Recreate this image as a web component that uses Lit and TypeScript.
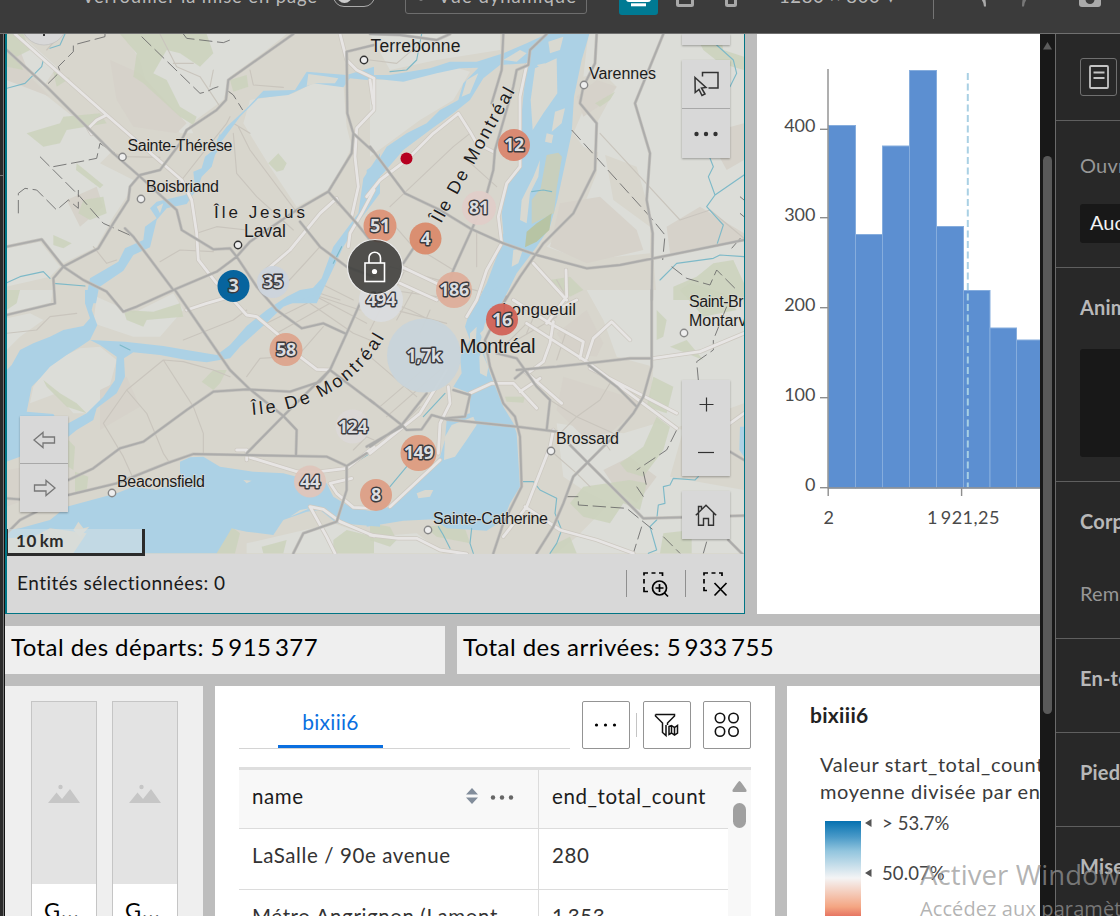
import { LitElement, html, svg, css } from "lit";
import { customElement } from "lit/decorators.js";

/* Map geometry is kept in four tiles, each drawn at three units per pixel. */
type Tile = "A" | "B" | "C" | "D";
const ORIGIN: Record<Tile, string> = {
  A: "translate(0 0) scale(.33333)",
  B: "translate(370 0) scale(.33333)",
  C: "translate(0 290) scale(.33333)",
  D: "translate(370 290) scale(.33333)",
};

const rural: [Tile, string][] = [
  ["A", "M20 160L130 280 270 390 340 450 300 490 400 540 380 590 340 650 290 740 190 790 120 720 20 740ZM20 102H60L170 200 130 260 60 190 20 170ZM370 102H860L800 150 690 230 670 300 560 380 520 340 440 250 420 180ZM730 370L750 300 880 280 940 250 1030 250 1040 380 1055 440 1000 560 890 620 810 500ZM500 330L560 360 580 400 540 400ZM20 745L120 725 180 800 150 830 20 860Z"],
  ["B", "M30 240L250 200 300 215 250 300 150 360 0 470 0 240ZM0 102H390V150L200 180 60 210ZM655 102H1122V900H860L840 640 800 500 640 440 610 400 640 330 680 370 740 260 700 220 640 230ZM690 380L730 600 840 680 840 760 640 780 530 740 640 620 680 520Z"],
  ["C", "M100 290L150 220 240 175 300 170 350 210 320 320 260 370 220 370 170 310 90 340ZM290 20L400 70 520 10 550 60 480 140 400 140 280 100ZM20 0H160L150 45 20 75ZM20 85L90 70 130 90 60 140 20 180ZM740 760L1000 700 1122 740V790H740Z"],
  ["D", "M650 0H1122V340L900 420 840 360 850 230 740 200 700 90ZM560 400L760 430 860 400 940 420 900 560 1122 600V790H560L620 740 720 640 640 600 580 560ZM0 740L140 730 220 790H0Z"],
];

const urban: [Tile, string][] = [
  ["A", "M20 240L150 290 90 230 60 150 20 150ZM330 180L420 220 560 370 530 400 400 380 350 300ZM200 600L290 560 310 620 240 680Z"],
  ["B", "M620 290L680 240 740 260 700 310 640 350ZM570 610L690 590 800 690 820 750 650 790 540 740ZM890 680L990 620 1122 700V720L900 760ZM1010 400L1122 370V480L1070 510Z"],
  ["C", "M300 300L380 260 420 350 300 420ZM20 540L80 530 100 620 20 650Z"],
  ["D", "M560 130L650 60 700 160 680 200 600 190ZM580 260L740 310 820 340 720 430 640 440 560 360ZM700 540L780 500 860 560 800 640 740 600Z"],
];

const parks: [Tile, string][] = [
  ["A", "M360 102H620L640 160 600 200 540 160 500 150 460 220 500 240 540 320 590 350 580 375 540 350 430 250 400 230 410 160ZM690 240L740 225 745 260 700 275ZM20 102H70L90 150 50 170 70 210 20 200ZM80 400L180 370 190 350 300 340 320 370 200 390 180 430 130 440ZM805 490L835 460 860 490 850 510 830 515ZM250 600L310 590 320 640 270 660 235 640ZM160 705L215 730 190 745 160 735ZM230 490L310 555 300 565 228 510ZM160 215L210 235 170 260Z"],
  ["B", "M975 102H1050L1060 150 1122 170V210L1050 190 1000 150ZM675 310L735 275 720 300 690 320ZM910 860L980 830 1030 790 1090 780 1122 850V900H910ZM970 410L1010 450 990 470Z"],
  ["C", "M370 60L460 65 540 40 550 80 440 90 430 110 380 90ZM605 275L640 240 680 240 660 280 640 300ZM130 270L180 310 230 340 260 370 200 350 140 290ZM225 545L265 560 260 600 225 610ZM660 750L695 710 720 730 705 790H650ZM785 770L860 750 850 790H790ZM1000 750L1040 720 1122 740V790H1000ZM20 0H60L50 40 20 60ZM205 450L225 470 220 540 205 530Z"],
  ["D", "M850 260L910 290 890 370 830 350ZM750 520L820 470 860 380 900 410 880 480 820 560 770 545ZM600 640L640 590 780 570 830 580 810 660 760 640 720 700 640 680ZM560 760L600 740 620 790H540ZM880 730L965 720V790H870ZM0 700L60 710 80 750 60 770 0 750ZM860 60L890 90 880 140 860 150ZM900 170L950 150 1000 210ZM405 320L465 320 460 338 410 335ZM930 0L960 -20 1060 10 1100 60 1000 80ZM165 710L280 700 300 760 200 740ZM540 -30L600 -40 640 0 600 20Z"],
];

const water: [Tile, string][] = [
  ["A", "M1122 200L1040 225 920 215 885 270 790 272 740 325 680 380 650 420 668 420 720 350 775 295 865 285 940 250 1030 262 1050 235 1122 242ZM660 400L640 450 615 470 605 505 580 515 585 560 555 585 470 605 450 625 470 655 435 680 430 720 375 745 355 785 270 835 255 910H288L297 862 370 812 400 765 450 742 470 660 500 625 560 612 595 560 605 530 635 500 645 465 668 430ZM1140 460L1090 535 1075 640 1000 740 965 835 925 880 850 910H950L1000 805 1030 740 1080 660 1140 580Z"],
  ["B", "M530 102L470 130 400 160 320 185 240 185 180 205 60 225 0 225V235L100 245 200 220 270 205 325 203 280 250 265 300 210 330 170 370 110 400 50 440 20 490 -10 510V570L40 520 100 450 180 390 250 340 300 300 340 235 390 195 470 190 450 390 470 440 440 510 410 560 395 640 400 700 380 770 350 850 315 920H390L440 820 500 740 540 680 562 600 590 470 605 400 612 290 635 180 658 102Z"],
  ["C", "M20 240L35 225 60 180 100 160 150 140 190 120 250 108 270 85 255 40V0H290L275 60 292 105 270 150 240 170 200 195 150 230 120 265 95 290 80 365 160 372 205 440 60 500 20 515ZM270 150L375 155 490 168 560 180 650 195 690 165 740 108 800 60 860 20 900 0 960 -10 955 12 895 32 850 50 800 98 720 170 690 205 620 217 560 210 480 195 400 187 372 205 375 260 350 310 290 355 280 390 230 420 205 440V400L260 370 310 320 345 270 350 200 300 165ZM20 722L60 715 150 690 200 650 350 610 400 590 470 600 520 580 545 565 540 545V515L570 502 610 500 660 530 760 545 850 550 890 560 980 580 1000 620 1050 650 1140 670V710L1080 705 1010 700 960 660 920 665 850 690 820 735 740 725 715 720 695 715 680 740 650 790H220L260 730 150 715 100 740 20 745Z"],
  ["D", "M385 -10L330 20 300 60 285 110 300 150 270 200 275 250 250 290 300 310V370L230 390 225 450 210 500 150 570 60 650 -10 665V710L100 692 190 688 230 715 350 722 400 690 420 640 450 590 440 430 430 400 400 350 380 300 360 250 345 200 330 160 345 100 380 60 420 -10ZM1110 410H1122V500L1108 480Z"],
];

const islands: [Tile, string][] = [
  ["A", "M925 222L970 228 1015 235 1005 250 950 250 920 258ZM470 620L490 610 480 640Z"],
  ["B", "M495 205L560 175 562 280 520 340 488 390 482 300ZM555 335L585 325 575 370 545 395ZM530 400L550 405 545 430 525 425ZM490 530L510 480 505 530 480 580 470 670 450 660 455 600ZM400 180L450 150 470 160 440 185ZM290 240L325 220 300 280 275 290ZM535 125L580 110 570 150 540 160ZM500 195L525 190 520 210ZM430 750L460 745 445 790 425 800Z"],
  ["C", "M220 720L235 695 250 715 268 710 240 740ZM730 570L755 572 740 580ZM900 660L930 655 870 680Z"],
  ["D", "M245 405L310 380 320 405 290 450 255 500 222 510 225 440ZM140 610L165 600 190 600 180 620 145 625ZM335 185L355 230 350 260 330 250 328 200ZM300 130L320 110 315 190 300 170ZM330 130L350 110 345 160Z"],
];

const greenIslands: [Tile, string][] = [
  ["B", "M530 465L565 458 576 470 560 565 552 640 485 672 485 600 512 565Z"],
];
const darkIslands: [Tile, string][] = [["B", "M500 670L545 640 538 690 500 725 465 742 470 695Z"]];

const minor: [Tile, string][] = [
  ["A", "M480 102L530 200 600 230 640 290 660 320M340 460L380 470 480 472M545 540L600 470 680 370 690 350M715 380L750 450 870 610 900 650M700 400L710 520 770 590 880 690M590 700L650 680 740 690M280 740L320 790 350 780M480 785L540 750 640 755M850 860L910 795 960 740M960 850L1060 900M930 870L1020 900M140 150L220 60M750 400L700 370M640 210L630 260M520 190L580 190M850 262L760 255 750 210"],
  ["B", "M60 620L250 440 300 400M50 650L120 730 250 810M280 470L380 560M60 870L200 890M690 400L930 660 1020 630 1122 715M110 800L60 900M320 700L320 800M30 850L60 800 350 880M0 180L80 190 150 130"],
  ["C", "M20 130L110 120 150 80 230 70M490 210L380 300 310 400 370 500 395 555M380 300L440 370 490 490 510 520M490 210L550 215 640 240 690 260M490 210L580 350 610 430V490M550 150L700 90 740 60M740 260L780 205 860 200M720 140L800 100 960 20 1080 60M830 130L990 40M900 190L970 110M930 40L1060 130 1122 155M950 20L1100 100M1060 480L1100 440 1122 450"],
  ["D", "M0 40L230 100M20 20L120 60 220 110M60 0L0 120M130 0L80 90M180 60L150 130M0 200L140 320M30 350L170 230M50 380L210 240M540 330L620 380 730 430M720 280L690 330 620 380 570 430M470 100L400 170M440 150L560 80M540 480L620 550 660 590M720 480L690 440M500 60L470 130M590 120L560 210M560 -30L600 40M0 490L60 440 150 350"],
];

const white: [Tile, string][] = [
  ["A", "M45 102L320 345 545 540 575 600 590 700 595 780 650 850M320 345L290 360 265 385 275 402M1020 102L1040 180 1070 210 1122 235V330L1070 385 1065 470 1075 560 1055 650M800 810L870 750 960 640 1010 595 1015 610M1122 570L1085 640 1050 700 1045 740"],
  ["B", "M-10 590L30 540 110 480 190 400 265 340 300 395 320 430 370 455M470 195L450 290 450 390 450 500 410 550 385 650 395 730 350 810 320 900 290 950M490 790L590 900M588 810L590 890 530 970M95 800L210 855M90 850L200 900M0 240L10 310"],
  ["C", "M560 60L620 40 690 20 740 75 770 80 830 130 900 200 950 238 990 240M750 502L890 545 960 545 1040 535 1122 470M1005 790L980 740 930 650 970 658 1020 695 1122 738M1055 565L990 580 1010 610 1060 652 1122 655M710 480H740V510"],
  ["D", "M470 100L650 215 920 415M850 205L990 185 1122 130M430 30L540 100 640 155 630 205M550 95L540 160 520 215 480 245M650 205L670 145 725 95 780 150M660 235L920 370M550 420L540 470 470 650 400 740M465 650L570 720 680 750 790 790M0 735L85 745 140 745 210 780 290 792M60 650L210 510M300 310L365 280 430 280 500 355M460 240L575 340M510 265L450 305M235 290L240 340 210 400 205 490M0 490L150 370 230 240M580 50L620 30M1080 400L1122 370"],
];

const major: [Tile, string][] = [
  ["A", "M20 150L140 260 340 460 420 530 530 630 545 690 640 748 690 745 710 770 770 860 830 930 905 985 970 970 1035 1000M880 102L685 240 678 300 650 330 560 390 540 430 480 510 420 525 390 560 385 600 340 670 295 745 190 800 160 835 165 910 20 945M1122 135L1040 155 1042 340 1060 400 1055 460 985 575 890 630 750 725 710 770 650 815 520 870 410 920 370 935 320 875 250 840 190 800M20 740L125 718 190 800M375 685L400 710 520 870M1060 400L1120 455M985 575L1070 670 1110 720M900 665L960 740 1040 800 1120 830"],
  ["B", "M0 440L105 580 210 630 300 685 400 730 500 765 650 805 750 795 850 775 1122 720M400 102L395 210 365 310M530 102L480 150 475 195 440 210 430 260 375 450 370 510 345 600 300 700 250 810 220 900M680 102L675 190 640 260 630 310 680 370 675 510 640 580 610 640 520 730 450 830 400 910M880 102L795 310 840 460 830 600 848 700 845 900M0 102L90 105 200 120 240 102M140 730L100 790"],
  ["C", "M525 0L690 240 750 298 850 378 890 420 888 495M205 570L280 535 360 475 430 455 560 360 640 305 740 298 870 305 960 275 990 240 1040 130 1080 40M990 240L1122 340M205 615L350 580 500 520 580 492 980 500 1040 528 1100 490M740 490L850 378 990 240M20 730L60 690 110 665M1040 528V600L1010 695 910 730 880 790M20 625L60 628"],
  ["D", "M0 330L95 405 110 420 155 418 185 375 230 388 440 410 560 425M410 20L370 100 345 150 360 230 400 340 435 380 450 440 455 590 430 640 400 700 370 790M440 240L560 230 650 220 780 205 845 205M845 0V230L820 320 790 370 740 430 660 510 610 560 580 640 550 710 500 790M600 465L820 685 1122 677M380 190L440 205 465 240 500 290 540 330 530 420M465 240L435 265M655 225L740 290 800 350M0 470L95 405 170 310M250 300L300 315 285 380 225 385M1075 750L1120 795M1080 485L1122 510M-10 470L95 410"],
];

const streams: [Tile, string][] = [
  ["A", "M20 265L75 250 125 200 130 180M195 102L180 135 150 145M20 848L60 830 130 815 150 835M160 850L255 858M1000 790L1025 740"],
  ["B", "M1040 135L1090 180 1100 220 1080 260M1020 475L1030 500 1015 530 1035 585 1010 620 1060 675 1042 730M1035 585L1122 525M870 840L920 790 1030 775 1050 765 1122 770M60 215L110 210 140 180 155 102M485 575L520 570 545 575M1025 325V330"],
  ["C", "M360 165L390 180M1110 490L1045 530"],
  ["D", "M985 560L975 570 910 565 900 585 880 590 885 640 865 645 860 690 840 710 860 780 835 790M455 575L490 575 510 600 560 625 555 670 575 720 560 760 540 790M205 710L220 735 240 775M305 715L300 760 310 790M225 310L160 380M110 530L60 590"],
];

const borders: [Tile, string][] = [
  ["A", "M425 110L600 280 620 275 640 265 655 260M315 102V110L220 135V155L175 200 180 215 135 260M550 102L560 115 670 128 690 120M680 270L700 285 728 330M120 470L240 590 310 670 400 710M160 500L240 485 290 475 300 430 345 460M55 640V580L75 565 110 570 170 630 205 600 235 625 235 570"],
  ["B", "M605 390L840 650 885 705 878 780M905 800L950 835 1020 855 1040 810 1100 870M1110 590L1122 600M1110 640L1122 650M1085 745L1115 710"],
  ["D", "M1070 50L1030 150 1030 180 980 215 985 270M920 420L890 480 800 540M820 545L830 590M585 620L625 620 625 645 770 655 850 720M815 710L790 790M880 740L930 790M1010 755L1000 790M800 590L820 620"],
];

const shapes = (list: [Tile, string][], cls: string) =>
  list.map(([t, d]) => svg`<path class=${cls} transform=${ORIGIN[t]} d=${d}></path>`);

/* x, baseline, drawn width, size, label */
const places: [number, number, number, number, string][] = [
  [370.5, 52, 90, 17.5, "Terrebonne"],
  [589, 79, 67, 16, "Varennes"],
  [127.5, 151, 105, 16, "Sainte-Thérèse"],
  [146, 192, 73, 16, "Boisbriand"],
  [214, 218, 91, 17, "Île Jesus"],
  [244, 237, 42, 17.5, "Laval"],
  [117, 487, 88, 16, "Beaconsfield"],
  [502, 315, 74, 17, "Longueuil"],
  [459.5, 353, 76, 20.5, "Montréal"],
  [556, 444, 63, 16, "Brossard"],
  [433, 524, 115, 16, "Sainte-Catherine"],
  [689, 307, 80, 16, "Saint-Bruno"],
  [689, 326, 77, 16, "Montarville"],
];
const towns: [number, number, boolean][] = [
  [364, 60, true], [584, 85, false], [122.5, 157, false], [141, 199, false], [238, 245, true],
  [112, 493, false], [551, 451, false], [428, 530, false], [684, 333, false],
];
/* x, y, radius, fill, count */
const clusters: [number, number, number, string, string][] = [
  [273, 282, 16, "#ccd4dc", "35"],
  [233.5, 286, 16, "#00609c", "3"],
  [514, 145, 16, "#d98770", "12"],
  [479, 208, 17, "#e0cdc8", "81"],
  [380, 226, 16.5, "#dd9579", "51"],
  [425.5, 238.5, 16, "#da8c6d", "4"],
  [454, 290, 18, "#deae9b", "186"],
  [381, 300, 22, "#dadcde", "494"],
  [424, 355.5, 37, "#c8d4da", "1,7k"],
  [502, 319.5, 16, "#d2655a", "16"],
  [286, 349.5, 16.5, "#dda58d", "58"],
  [352.5, 426.5, 17, "#dbd8d6", "124"],
  [418.5, 453, 18, "#dd9d81", "149"],
  [310, 481.5, 16, "#dec5bb", "44"],
  [376, 495, 16, "#dda087", "8"],
];

const bars: [number, number, number][] = [
  [828.5, 27, 125.5], [855.5, 27, 234.5], [882.5, 27, 146], [909.5, 27, 70.5],
  [936.5, 27, 226.5], [963.5, 26.5, 290.5], [990, 26.5, 328], [1016.5, 27, 340],
];

@customElement("station-map")
class StationMap extends LitElement {
  static styles = css`
    :host { display: block; position: relative; height: 520px; }
    svg { display: block; }
    .canvas { position: absolute; inset: 0; overflow: hidden; }
    .rural { fill: #dcddd8; }
    .urban { fill: #d6d2ca; }
    .park { fill: #cbd2bc; opacity: .85; }
    .water { fill: #acd1e5; }
    .island { fill: #d9d9d1; }
    .green { fill: #c8cfbd; }
    .dark { fill: #b7c4a4; }
    path.minor, path.casing, path.white, path.major, path.shade, path.stream, path.border {
      fill: none; stroke-linejoin: round; stroke-linecap: round;
    }
    .minor { stroke: #c9c5bd; stroke-width: 3.4; }
    .casing { stroke: #cdc9c1; stroke-width: 13; }
    .white { stroke: #e7e5e4; stroke-width: 8.5; }
    .shade { stroke: #c4c2bd; stroke-width: 9.5; }
    .major { stroke: #acacab; stroke-width: 5.5; }
    .stream { stroke: #7db9c8; stroke-width: 3.4; }
    path.border { stroke: #6a6a6a; stroke-width: 2.6; stroke-dasharray: 40 14; stroke-linecap: butt; }
    .place { font-family: "Liberation Sans", Arial, sans-serif; fill: #1c1c1c; stroke: #dedcd6; stroke-width: 1.6px; stroke-opacity: .75; paint-order: stroke; }
    .isle { font-size: 18px; }
    .count { font: 700 18px "Noto Sans", "Open Sans", sans-serif; fill: #dcdde0; stroke: #3b3b3e; stroke-width: 2.8px; paint-order: stroke; stroke-linejoin: round; text-anchor: middle; letter-spacing: -.4px; }
    .btns { position: absolute; display: flex; flex-direction: column; width: 48px; background: #d8d8d8; box-shadow: 0 1px 2px rgba(0,0,0,.3); }
    .btn { height: 48px; display: grid; place-items: center; }
    .rule { height: 1px; background: #a8a8a8; }
    .peek { right: 14px; top: 0; height: 11px; }
    .select { right: 14px; top: 26px; }
    .select .btn:last-child { height: 49px; }
    .zoom { right: 14px; top: 346px; }
    .home { right: 14px; top: 457px; }
    .history { left: 13px; top: 382px; }
    .history .btn:first-child { height: 47px; }
    .scale { box-sizing: border-box; position: absolute; left: 0; bottom: -2px; width: 138px; height: 27px; padding-left: 8px; border: solid #2b2b2b; border-width: 0 3px 3px 1px; background: rgba(216,225,228,.5); font: 700 17px/23px Lato, sans-serif; color: #2b2b2b; letter-spacing: .6px; }
  `;

  render() {
    return html`
      <svg class="canvas" width="737" height="520" viewBox="7 34 737 520">
        <defs>
          <path id="east" d="M441 224Q474 164 517 88"></path>
          <path id="west" d="M252 415Q345 408 386 335"></path>
        </defs>
        <rect x="7" y="34" width="738" height="520" fill="#d8d6cd"></rect>
        ${shapes(rural, "rural")}${shapes(urban, "urban")}${shapes(parks, "park")}
        ${shapes(minor, "minor")}${shapes(water, "water")}
        ${shapes(islands, "island")}${shapes(greenIslands, "green")}${shapes(darkIslands, "dark")}
        ${shapes(streams, "stream")}${shapes(borders, "border")}
        ${shapes(white, "casing")}${shapes(white, "white")}
        ${shapes(major, "shade")}${shapes(major, "major")}
        <circle cx="44" cy="22" r="23" fill="#d8d8d8" stroke="#bbb" stroke-width=".6"></circle>
        <path d="M44 30V36" stroke="#333" stroke-width="2"></path>
        ${towns.map(([x, y, city]) => svg`<circle cx=${x} cy=${y} r="3.7" fill="#eee" stroke=${city ? "#333" : "#888"} stroke-width="1.4"></circle>`)}
        ${places.map(([x, y, w, s, t]) => svg`<text class="place" x=${x} y=${y} font-size=${s} textLength=${w}>${t}</text>`)}
        <text class="place isle" textLength="152"><textPath href="#east" textLength="152">Île De Montréal</textPath></text>
        <text class="place isle" textLength="160"><textPath href="#west" textLength="160">Île De Montréal</textPath></text>
        ${clusters.map(([x, y, r, fill, n]) => svg`<circle cx=${x} cy=${y} r=${r} fill=${fill} fill-opacity=".97"></circle><text class="count" x=${x} y=${y + 6}>${n}</text>`)}
        <circle cx="406.5" cy="158.5" r="6" fill="#b6001f"></circle>
        <circle cx="375" cy="267" r="27.5" fill="#3c3c3a" fill-opacity=".88" stroke="#ededed" stroke-width="1.2"></circle>
        <g fill="none" stroke="#fff" stroke-width="1.6"><rect x="365" y="263" width="19.500" height="18.500"></rect><path d="M369 263V258A5.700 5.700 0 0 1 380.500 258V263"></path></g>
        <circle cx="374.500" cy="271.500" r="2.600" fill="#fff"></circle>
      </svg>
      <div class="btns peek"></div>
      <div class="btns select">
        <div class="btn"><svg width="26" height="26" viewBox="0 0 26 26" fill="none" stroke="#323232" stroke-width="1.5"><path d="M9.500 5.500V1.500H25V17H15.500"></path><path d="M2 6.500L13 16.500L8.500 17L12 23L9 24.500L6 18.500L2.200 21.500Z"></path></svg></div>
        <div class="rule"></div>
        <div class="btn"><svg width="26" height="6"><g fill="#323232"><circle cx="3.500" cy="3" r="2.200"></circle><circle cx="13" cy="3" r="2.200"></circle><circle cx="22.500" cy="3" r="2.200"></circle></g></svg></div>
      </div>
      <div class="btns zoom">
        <div class="btn"><svg width="16" height="16"><path d="M1.500 8.500H15.500M8.500 1.500V15.500" stroke="#323232" stroke-width="1.200"></path></svg></div>
        <div class="btn"><svg width="16" height="16"><path d="M0 8.500H16" stroke="#323232" stroke-width="1.200"></path></svg></div>
      </div>
      <div class="btns home">
        <div class="btn"><svg width="24" height="24" viewBox="0 0 24 24" fill="none" stroke="#323232" stroke-width="1.400"><path d="M1.800 12.300L12 2.200L22.200 12.300M4.500 10V22.300H9.500V15.500H14.500V22.300H19.500V10M4.500 9V3.500H7.500V6"></path></svg></div>
      </div>
      <div class="btns history">
        <div class="btn"><svg width="24" height="18" fill="none" stroke="#777" stroke-width="1.300"><path d="M2 9L11 1.500V6H22.500V12H11V16.500Z"></path></svg></div>
        <div class="rule"></div>
        <div class="btn"><svg width="24" height="18" fill="none" stroke="#777" stroke-width="1.300"><path d="M23 9L14 1.500V6H2.500V12H14V16.500Z"></path></svg></div>
      </div>
      <div class="scale">10\u2009km</div>
    `;
  }
}

@customElement("count-chart")
class CountChart extends LitElement {
  static styles = css`
    :host { display: block; background: #fff; overflow: hidden; }
    svg { display: block; }
    text { font: 18px Lato, sans-serif; fill: #4a4a4a; }
    .y { text-anchor: end; }
    .x { text-anchor: middle; letter-spacing: .5px; }
    .bar { fill: #5c8fd1; stroke: #86addd; stroke-width: 1; }
    .axis { stroke: #8e8e8e; stroke-width: 1.4; fill: none; }
    .mean { stroke: #a9d0e4; stroke-width: 2; stroke-dasharray: 7 3.5; }
  `;
  render() {
    const ticks = [[129.3, "400"], [217.7, "300"], [307.7, "200"], [397.7, "100"], [487.7, "0"]] as const;
    return html`<svg width="283" height="580" viewBox="757 34 283 580">
      ${bars.map(([x, w, y]) => svg`<rect class="bar" x=${x} y=${y} width=${w} height=${488 - y}></rect>`)}
      <path class="mean" d="M967.800 73V487"></path>
      <path class="axis" d="M828 69V488H1040M828.200 488V496M961.600 488V496"></path>
      ${ticks.map(([y, t]) => svg`<path class="axis" d="M820 ${y}H828"></path><text class="y" x="815.5" y=${y + 2.8}>${t}</text>`)}
      <text class="x" x="829" y="523.500">2</text>
      <text class="x" x="963.500" y="523.500">1\u2009921,25</text>
    </svg>`;
  }
}

@customElement("app-root")
class AppRoot extends LitElement {
  static styles = css`
    :host { display: flex; flex-direction: column; position: relative; width: 1120px; height: 916px; overflow: hidden; font-family: Lato, sans-serif; background: #282828; }
    * { box-sizing: border-box; }
    svg { display: block; flex: none; }
    .top { flex: none; height: 34px; background: #3b3b3b; border-bottom: 1px solid #707070; overflow: hidden; color: #b9b9b9; font-size: 18.5px; }
    .tools { display: flex; align-items: center; height: 66px; margin-top: -37px; white-space: nowrap; }
    .lock-label { width: 251px; margin-left: 82px; letter-spacing: .85px; }
    .toggle { width: 42px; height: 22px; border: 1.5px solid #aaa; border-radius: 11px; padding: 2px 3px; }
    .knob { width: 15px; height: 15px; border-radius: 50%; background: #ccc; }
    .live { margin-left: 30px; width: 182px; height: 36px; border: 1px solid #6e6e6e; border-radius: 3px; display: flex; align-items: center; padding-left: 10px; gap: 12px; letter-spacing: 1px; }
    .desktop { margin-left: 32px; width: 39px; height: 38px; background: #007a93; border-radius: 3px; display: grid; place-items: center; }
    .tablet { margin-left: 18px; }
    .phone { margin-left: 31px; }
    .size { margin-left: 42px; width: 154px; letter-spacing: .6px; }
    .bar-rule { width: 1px; height: 46px; background: #747474; }
    .undo { margin-left: 35px; }
    .redo { margin-left: 34px; }
    .shot { margin-left: 40px; }

    .work { flex: 1; display: flex; min-height: 0; }
    .rail { width: 4px; flex: none; border-right: 1px solid #777; background: #2b2b2b; padding-top: 141px; }
    .rail-rule { height: 1px; background: #777; }
    .page { width: 1036px; flex: none; border-left: 1px solid #111; background: #bdbdbd; display: flex; flex-direction: column; gap: 12px; overflow: hidden; }
    .row { display: flex; gap: 12px; flex: none; }
    .row.first { height: 580px; }
    .row.totals { height: 48px; }
    .row.last { height: 230px; }

    .map-card { width: 740px; flex: none; border: 1px solid #007585; border-width: 0 1px 1px 2px; background: #d8d8d8; }
    .map-foot { height: 59px; display: flex; align-items: center; padding: 0 15px 0 10px; font-size: 19px; color: #1a1a1a; }
    .map-foot span { flex: 1; letter-spacing: .5px; padding-bottom: 2px; }
    .foot-rule { width: 1px; height: 27px; background: #8f8f8f; }
    .zoom-sel { margin: 0 16px 0 14px; }
    .clear-sel { margin-left: 15px; }
    count-chart { width: 283px; flex: none; }

    .total { background: #efefef; font-size: 24px; line-height: 42px; color: #000; padding-left: 6px; letter-spacing: .45px; white-space: nowrap; overflow: hidden; }
    .t1 { width: 440px; }
    .t2 { flex: 1; }

    .gallery { width: 198px; background: #efefef; display: flex; gap: 15px; padding: 15px 0 0 26px; }
    .thumb { width: 66px; border: 1px solid #c5c5c5; border-bottom: 0; background: #fff; font-size: 22px; }
    .pic { height: 182px; background: #e3e3e3; display: grid; place-items: center; padding-top: 2px; }
    .cap { padding: 12px 0 0 12px; line-height: 27px; letter-spacing: 1px; }

    .table-card { width: 560px; background: #fff; padding: 15px 24px 0; }
    .tabs { display: flex; height: 48px; }
    .tabline { width: 331px; margin-right: 12px; border-bottom: 1px solid #d4d4d4; padding-left: 39px; }
    .tab { width: 105px; height: 47px; border-bottom: 3px solid #0a6fe0; color: #0a6fe0; text-align: center; font-size: 21px; line-height: 42px; letter-spacing: .3px; }
    .sq { width: 48px; height: 48px; border: 1px solid #949494; border-radius: 2px; display: grid; place-items: center; }
    .sq-rule { width: 1px; height: 24px; background: #c4c4c4; margin: 12px 6px; }
    .sq + .sq { margin-left: 12px; }
    .grid { margin-top: 18px; border-top: 3px solid #dedede; display: flex; height: 149px; overflow: hidden; }
    .cells { width: 489px; display: grid; grid-template-columns: 300px 189px; grid-template-rows: 59px 61px 61px; }
    .cell { border-bottom: 1px solid #dcdcdc; border-right: 1px solid #dcdcdc; padding-left: 13px; display: flex; align-items: center; font-size: 20.5px; color: #333; letter-spacing: .6px; white-space: nowrap; padding-bottom: 9px; }
    .cell.end { border-right: 0; }
    .cell.head { background: #f8f8f8; color: #1c1c1c; padding-bottom: 6px; }
    .cell.head.first-col { padding-right: 20px; }
    .cell .name { flex: 1; }
    .bar-v { width: 23px; background: #f8f8f8; padding: 11px 0 0 4px; }
    .bar-thumb { width: 13px; height: 25px; border-radius: 7px; background: #a0a0a0; margin: 11px 0 0 1px; }

    .legend { flex: 1; background: #fff; padding: 15px 0 0 23px; overflow: hidden; white-space: nowrap; }
    .legend-title { font-size: 21px; font-weight: 700; line-height: 28px; color: #222; letter-spacing: .3px; }
    .legend-text { margin: 22px 0 0 10px; font-size: 20px; line-height: 27px; color: #3a3a3a; letter-spacing: .62px; }
    .ramp-row { display: flex; margin: 16px 0 0 15px; }
    .ramp { width: 36px; height: 100px; background: linear-gradient(#0571b0 0, #4a9ac8 16px, #92c5de 30px, #f4f4f5 57px, #f4a582 86px, #e5705f 96px, #e06556 100px); }
    .stops { display: flex; flex-direction: column; gap: 25px; margin: -11px 0 0 4px; font-size: 18.5px; color: #444; }
    .stop { display: flex; align-items: center; gap: 10px; height: 25px; letter-spacing: .1px; }

    .scroll { width: 15px; flex: none; background: #181818; padding: 8px 3px 0; }
    .scroll-thumb { margin-top: 106px; width: 9px; height: 558px; border-radius: 5px; background: #595959; }
    .scroll svg { height: 8px; }
    .side { flex: 1; border-left: 1px solid #6a6a6a; background: #282828; overflow: hidden; white-space: nowrap; color: #b8b8b8; font-size: 20px; }
    .sec { border-bottom: 1px solid #5f5f5f; padding-left: 24px; }
    .s1 { height: 87px; padding-top: 24px; }
    .s2 { height: 147px; padding-top: 31px; color: #979797; }
    .s3 { height: 214px; padding-top: 26px; font-weight: 700; }
    .s4 { height: 157px; padding-top: 26px; font-weight: 700; }
    .s5 { height: 94px; padding-top: 26px; font-weight: 700; }
    .lbl { line-height: 27px; letter-spacing: .2px; }
    .sub { color: #979797; font-weight: 400; margin-top: 45px; }
    .page-btn { width: 37px; height: 38px; border: 1px solid #707070; border-radius: 3px; display: grid; place-items: center; }
    .input { margin-top: 25px; height: 39px; width: 60px; background: #181818; border-radius: 3px; color: #f2f2f2; line-height: 36px; padding-left: 10px; overflow: hidden; }
    .well { margin-top: 28px; height: 108px; width: 60px; background: #181818; border-radius: 3px; }

    .activate { position: absolute; left: 920px; top: 857px; font-family: "Open Sans", sans-serif; color: rgba(150,150,150,.72); white-space: nowrap; }
    .big { font-size: 27.5px; line-height: 36px; letter-spacing: .1px; }
    .small { font-size: 20px; line-height: 32px; letter-spacing: .1px; }
  `;

  private picture = html`<svg width="34" height="20" viewBox="0 0 34 20" fill="#c6c6c6"><circle cx="13.5" cy="3" r="2.2"></circle><path d="M1 19L9.500 8.500L15 15L23 5L33 19Z"></path></svg>`;
  private left = html`<svg width="7" height="8"><path d="M0 4L6.500 0V8Z" fill="#555"></path></svg>`;

  render() {
    return html`
      <div class="top"><div class="tools">
        <span class="lock-label">Verrouiller la mise en page</span>
        <div class="toggle"><div class="knob"></div></div>
        <div class="live"><svg width="10" height="14"><circle cx="5" cy="7" r="4.5" fill="#ccc"></circle></svg>Vue dynamique</div>
        <div class="desktop"><svg width="26" height="24" fill="none" stroke="#fff" stroke-width="2"><rect x="1" y="2" width="23" height="15" rx="2"></rect><path d="M5 20.800H20" stroke-width="3"></path></svg></div>
        <svg class="tablet" width="18" height="22" fill="none" stroke="#a8a8a8" stroke-width="3"><rect x="1.5" y="1.5" width="15" height="19" rx="1"></rect></svg>
        <svg class="phone" width="12" height="22" fill="none" stroke="#a8a8a8" stroke-width="3"><rect x="1.5" y="1.5" width="9" height="19" rx="1"></rect></svg>
        <span class="size">1280 × 800 ▾</span>
        <div class="bar-rule"></div>
        <svg class="undo" width="18" height="22"><path d="M1 9L9 2V15ZM8 5Q17 6 17 21.500H15Q14 13 8 12Z" fill="#aaa"></path></svg>
        <svg class="redo" width="18" height="22"><path d="M17 9L9 2V15ZM10 5Q1 6 1 21.500H3Q4 13 10 12Z" fill="#777"></path></svg>
        <svg class="shot" width="22" height="22"><rect x="0" y="2" width="22" height="20" rx="3" fill="#aaa"></rect><circle cx="11" cy="14.500" r="4.500" fill="#3b3b3b"></circle></svg>
      </div></div>
      <div class="work">
        <div class="rail"><div class="rail-rule"></div></div>
        <div class="page">
          <div class="row first">
            <div class="map-card">
              <station-map></station-map>
              <div class="map-foot"><span>Entités sélectionnées: 0</span>
                <div class="foot-rule"></div>
                <svg class="zoom-sel" width="28" height="28" fill="none" stroke="#000" stroke-width="1.7"><path d="M3 5.500V3H7M10.500 3H14.500M18 3H21.500V6M3 9V13.500M3 17V21.500H7"></path><circle cx="18.500" cy="18" r="7"></circle><path d="M14.500 18H22.500M18.500 14V22M23.500 23L27 26.500"></path></svg>
                <div class="foot-rule"></div>
                <svg class="clear-sel" width="28" height="28" fill="none" stroke="#000" stroke-width="1.7"><path d="M3 5.500V3H7M10.500 3H14.500M18 3H21V6M3 9V13.500M3 17V20.500H6"></path><path d="M13.500 13L25.500 25.500M25.500 13L13.500 25.500"></path></svg>
              </div>
            </div>
            <count-chart></count-chart>
          </div>
          <div class="row totals">
            <div class="total t1">Total des départs: 5\u2009915\u2009377</div>
            <div class="total t2">Total des arrivées: 5\u2009933\u2009755</div>
          </div>
          <div class="row last">
            <div class="gallery">
              <div class="thumb"><div class="pic">${this.picture}</div><div class="cap">G...</div></div>
              <div class="thumb"><div class="pic">${this.picture}</div><div class="cap">G...</div></div>
            </div>
            <div class="table-card">
              <div class="tabs">
                <div class="tabline"><div class="tab">bixiii6</div></div>
                <div class="sq"><svg width="24" height="6"><circle cx="2.500" cy="3" r="1.600"></circle><circle cx="11.500" cy="3" r="1.600"></circle><circle cx="20.500" cy="3" r="1.600"></circle></svg></div>
                <div class="sq-rule"></div>
                <div class="sq"><svg width="26" height="26" fill="none" stroke="#111" stroke-width="1.500"><path d="M1.500 2.500H20.500V4L13.500 11V13M1.500 2.500V4L8.500 11V20.500L12 23.500V13"></path><path d="M15 14.500L17.500 13.500L20.500 15.500L23.500 13.500V21L20.500 23L17.500 21L15 22.500ZM17.500 13.500V21M20.500 15.500V23"></path></svg></div>
                <div class="sq"><svg width="26" height="26" fill="none" stroke="#111" stroke-width="1.600"><circle cx="6" cy="6" r="4.700"></circle><circle cx="19.500" cy="6" r="4.700"></circle><circle cx="6" cy="19.500" r="4.700"></circle><circle cx="19.500" cy="19.500" r="4.700"></circle></svg></div>
              </div>
              <div class="grid">
                <div class="cells">
                  <div class="cell head first-col"><span class="name">name</span><svg width="52" height="18"><path d="M0 7.500L6 1L12 7.500ZM0 10.500L6 17L12 10.500Z" fill="#828d9b"></path><g fill="#666"><circle cx="27" cy="10.500" r="2.200"></circle><circle cx="36" cy="10.500" r="2.200"></circle><circle cx="45" cy="10.500" r="2.200"></circle></g></svg></div>
                  <div class="cell head end">end_total_count</div>
                  <div class="cell">LaSalle / 90e avenue</div><div class="cell end">280</div>
                  <div class="cell">Métro Angrignon (Lamont...</div><div class="cell end">1\u2009353</div>
                </div>
                <div class="bar-v"><svg width="15" height="11"><path d="M7.500 0Q8.500 0 14.500 9Q15 11 13.500 11H1.500Q0 11 .5 9Q6.500 0 7.500 0Z" fill="#a0a0a0"></path></svg><div class="bar-thumb"></div></div>
              </div>
            </div>
            <div class="legend">
              <div class="legend-title">bixiii6</div>
              <div class="legend-text">Valeur start_total_count<br>moyenne divisée par end</div>
              <div class="ramp-row"><div class="ramp"></div><div class="stops">
                <div class="stop">${this.left}&gt; 53.7%</div>
                <div class="stop">${this.left}50.07%</div>
              </div></div>
            </div>
          </div>
        </div>
        <div class="scroll"><svg width="9" height="8"><path d="M4.500 0L9 7.500H0Z" fill="#5c5c5c"></path></svg><div class="scroll-thumb"></div></div>
        <div class="side">
          <div class="sec s1"><div class="page-btn"><svg width="20" height="24" fill="none" stroke="#c4c4c4" stroke-width="1.800"><rect x="1" y="1" width="18" height="22" rx="1"></rect><path d="M4.500 7.500H15.500M4.500 13H15.500"></path></svg></div></div>
          <div class="sec s2"><div class="lbl">Ouvrir avec</div><div class="input">Aucune</div></div>
          <div class="sec s3"><div class="lbl">Animation</div><div class="well"></div></div>
          <div class="sec s4"><div class="lbl">Corps</div><div class="lbl sub">Remplir</div></div>
          <div class="sec s5"><div class="lbl">En-tête</div></div>
          <div class="sec s5"><div class="lbl">Pied de page</div></div>
          <div class="sec s5"><div class="lbl">Mise en page</div></div>
        </div>
      </div>
      <div class="activate"><div class="big">Activer Windows</div><div class="small">Accédez aux paramètres</div></div>
    `;
  }
}
